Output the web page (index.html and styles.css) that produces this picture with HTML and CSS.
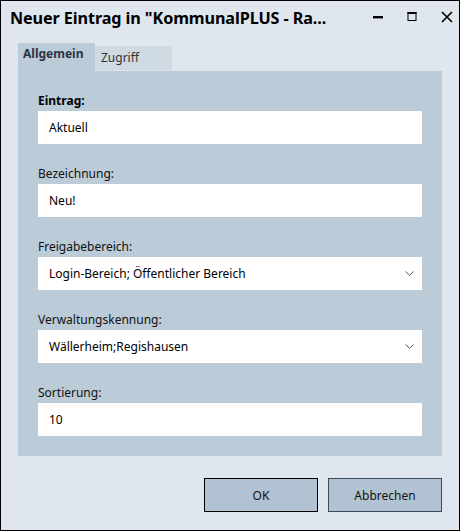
FILE: index.html
```html
<!DOCTYPE html>
<html lang="de">
<head>
<meta charset="utf-8">
<title>Neuer Eintrag</title>
<link rel="stylesheet" href="styles.css">
</head>
<body>
<div class="window">
  <div class="titlebar">
    <div class="title">Neuer Eintrag in "KommunalPLUS - Ra...</div>
    <div class="controls">
      <svg class="ctl ctl-min" width="12" height="12" viewBox="0 0 12 12"><rect x="1" y="5" width="10" height="2.4" fill="#000"/></svg>
      <svg class="ctl ctl-max" width="12" height="12" viewBox="0 0 12 12"><rect x="2" y="1.5" width="8" height="8" fill="none" stroke="#000" stroke-width="1"/><rect x="1.5" y="1" width="9" height="2" fill="#000"/></svg>
      <svg class="ctl ctl-close" width="14" height="14" viewBox="0 0 14 14"><path d="M2 2 L12 12 M12 2 L2 12" stroke="#000" stroke-width="1.6" fill="none"/></svg>
    </div>
  </div>
  <div class="tabs">
    <div class="tab tab-active">Allgemein</div>
    <div class="tab">Zugriff</div>
  </div>
  <div class="panel">
    <div class="field">
      <div class="label label-bold">Eintrag:</div>
      <div class="input">Aktuell</div>
    </div>
    <div class="field">
      <div class="label">Bezeichnung:</div>
      <div class="input">Neu!</div>
    </div>
    <div class="field">
      <div class="label">Freigabebereich:</div>
      <div class="input select">
        <span>Login-Bereich; Öffentlicher Bereich</span>
        <svg class="chev" width="9" height="5" viewBox="0 0 9 5"><path d="M0.5 0.5 L4.5 4.3 L8.5 0.5" stroke="#555" stroke-width="1" fill="none"/></svg>
      </div>
    </div>
    <div class="field">
      <div class="label">Verwaltungskennung:</div>
      <div class="input select">
        <span>Wällerheim;Regishausen</span>
        <svg class="chev" width="9" height="5" viewBox="0 0 9 5"><path d="M0.5 0.5 L4.5 4.3 L8.5 0.5" stroke="#555" stroke-width="1" fill="none"/></svg>
      </div>
    </div>
    <div class="field">
      <div class="label">Sortierung:</div>
      <div class="input">10</div>
    </div>
  </div>
  <div class="footer">
    <div class="btn btn-default">OK</div>
    <div class="btn">Abbrechen</div>
  </div>
</div>
</body>
</html>
```
FILE: styles.css
```css
* { box-sizing: border-box; }
html, body { margin: 0; padding: 0; }
body {
  font-family: "Noto Sans", "Open Sans", sans-serif;
  font-size: 12px;
  color: #000;
  background: #dfe6ed;
}
.window {
  width: 460px;
  height: 531px;
  border: 1px solid #000;
  background: #dfe6ed;
  display: flex;
  flex-direction: column;
}
.titlebar {
  height: 34px;
  display: flex;
  align-items: center;
  justify-content: space-between;
  padding-left: 9px;
}
.title {
  font-weight: 700;
  font-size: 16.2px;
  letter-spacing: -0.1px;
  color: #000;
  white-space: nowrap;
  margin-top: -1px;
}
.controls {
  display: flex;
  align-items: center;
  height: 100%;
}
.ctl { display: block; }
.ctl-min { margin-right: 22px; margin-top: -2px; }
.ctl-max { margin-right: 22px; margin-top: -2px; }
.ctl-close { margin-right: 5px; margin-top: -2px; }
.tabs {
  display: flex;
  align-items: flex-end;
  margin: 8px 17px 0;
  height: 28px;
}
.tab {
  width: 77px;
  height: 24px;
  background: #d0dae3;
  color: #333;
  padding: 3px 0 0 6px;
  margin-bottom: 1px;
}
.tab-active {
  height: 28px;
  background: #bccbd8;
  font-weight: 700;
  color: #2b3442;
  padding: 2px 0 0 5px;
  margin-bottom: 0;
}
.panel {
  margin: 0 17px;
  background: #bccbd8;
  padding: 20px;
  display: flex;
  flex-direction: column;
  gap: 20px;
}
.field {
  display: flex;
  flex-direction: column;
}
.label {
  height: 20px;
  line-height: 20px;
  color: #111;
}
.label-bold { font-weight: 700; color: #000; }
.input {
  height: 33px;
  background: #fff;
  padding: 0 11px;
  display: flex;
  align-items: center;
  justify-content: space-between;
  color: #000;
}
.chev { margin-right: -3px; }
.footer {
  display: flex;
  justify-content: flex-end;
  gap: 10px;
  margin: 22px 17px 0;
}
.btn {
  width: 114px;
  height: 34px;
  background: #b1c3d2;
  border: 1px solid #3b4b5c;
  display: flex;
  align-items: center;
  justify-content: center;
  color: #111;
  font-size: 12px;
}
.btn-default { border-color: #000; }
```
